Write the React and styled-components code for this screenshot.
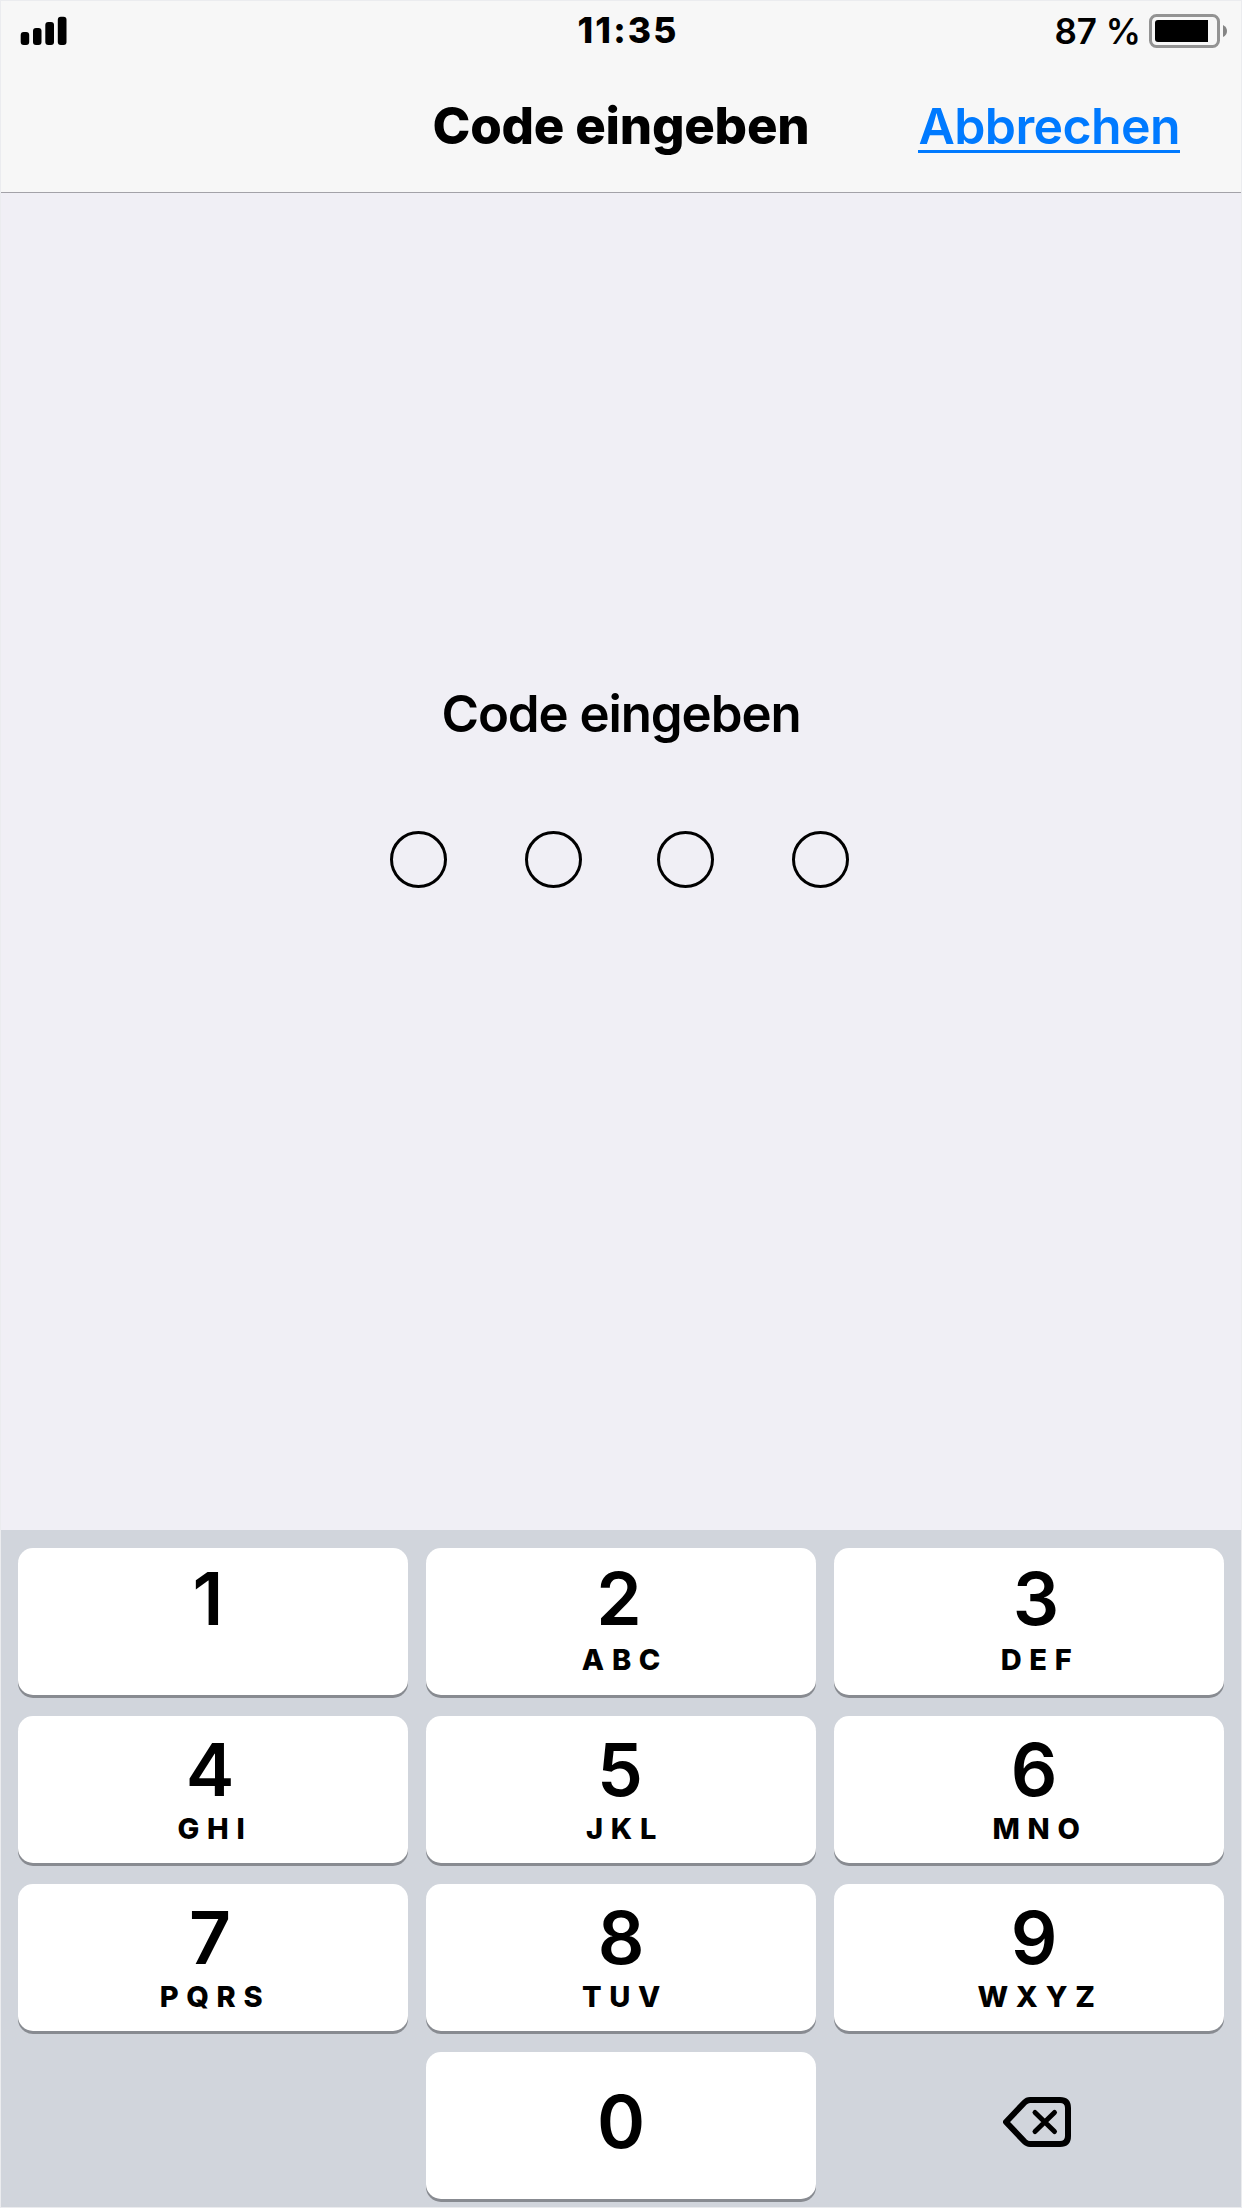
import React, { useState } from "react";
import styled, { createGlobalStyle } from "styled-components";

const GlobalStyle = createGlobalStyle`
  * {
    box-sizing: border-box;
  }
  body {
    margin: 0;
    font-family: Inter, "Liberation Sans", sans-serif;
    color: #000;
  }
`;

const Screen = styled.div`
  display: flex;
  flex-direction: column;
  width: 1242px;
  height: 2208px;
  background: #f0eff5;
  border: 1px solid #ebecef;
  overflow: hidden;
`;

const Header = styled.header`
  height: 192px;
  background: #f7f7f7;
  border-bottom: 1px solid #a3a2a8;
`;

const StatusBar = styled.div`
  display: grid;
  grid-template-columns: 1fr auto 1fr;
  align-items: center;
  height: 60px;
  padding: 0 13px 0 19px;
`;

const Time = styled.div`
  padding-left: 8px;
  font-size: 35.5px;
  font-weight: 800;
  line-height: 60px;
  letter-spacing: 2.1px;
`;

const BatteryStatus = styled.div`
  display: flex;
  justify-content: flex-end;
  align-items: center;
  gap: 8px;
  font-size: 35px;
  font-weight: 600;
  line-height: 60px;
`;

const NavBar = styled.div`
  display: grid;
  grid-template-columns: 1fr auto 1fr;
  height: 131px;
  padding-right: 61px;
  padding-left: 61px;
`;

const NavTitle = styled.h1`
  grid-column: 2;
  margin: 0;
  font-size: 51px;
  font-weight: 800;
  line-height: 129px;
  letter-spacing: -0.25px;
`;

const CancelButton = styled.button`
  justify-self: end;
  align-self: start;
  height: 57px;
  margin-top: 35px;
  padding: 0;
  border: none;
  border-bottom: 3px solid #007aff;
  background: none;
  color: #007aff;
  font-family: inherit;
  font-size: 50px;
  font-weight: 600;
  line-height: 60px;
  letter-spacing: -0.6px;
`;

const Main = styled.main`
  display: flex;
  flex: 1;
  flex-direction: column;
  align-items: center;
  padding-top: 480px;
`;

const Prompt = styled.div`
  font-size: 51px;
  font-weight: 600;
  line-height: 81px;
  letter-spacing: -1.1px;
`;

const Dots = styled.div`
  display: grid;
  grid-template-columns: repeat(4, 57px);
  justify-content: space-between;
  width: 459px;
  margin: 77px 3px 0 0;
`;

const Dot = styled.div`
  width: 57px;
  height: 57px;
  border: 3px solid #000;
  border-radius: 50%;
  background: ${(props) => (props.$filled ? "#000" : "transparent")};
  &:nth-child(2) {
    margin-left: 1px;
  }
  &:nth-child(3) {
    margin-left: -1px;
  }
`;

const Keypad = styled.div`
  display: grid;
  grid-template-columns: repeat(3, 390px);
  grid-auto-rows: 147px;
  gap: 21px 18px;
  height: 677px;
  padding: 18px 17px 0;
  background: #d1d5dc;
`;

const Key = styled.button`
  display: flex;
  flex-direction: column;
  align-items: center;
  padding: ${(props) => props.$top}px 0 0;
  border: none;
  border-radius: 15px;
  background: #fff;
  box-shadow: 0 3px 0 #888b91;
  color: #000;
  font-family: inherit;
`;

const Digit = styled.span`
  margin-left: ${(props) => props.$shift * 2}px;
  font-size: 73px;
  font-weight: 600;
  line-height: 74px;
`;

const Letters = styled.span`
  margin-top: ${(props) => props.$gap}px;
  margin-left: ${(props) => props.$shift * 2 + 8}px;
  font-size: 29px;
  font-weight: 800;
  line-height: 30px;
  letter-spacing: 7.7px;
`;

const DeleteKey = styled.button`
  grid-column: 3;
  display: flex;
  justify-content: center;
  align-items: center;
  padding: 0 0 8px 16px;
  border: none;
  background: none;
`;

const KEYS = [
  { digit: "1", shift: -5 },
  { digit: "2", letters: "ABC", shift: -2 },
  { digit: "3", letters: "DEF", shift: 7 },
  { digit: "4", letters: "GHI", shift: -3 },
  { digit: "5", letters: "JKL", shift: -1 },
  { digit: "6", letters: "MNO", shift: 5 },
  { digit: "7", letters: "PQRS", shift: -3 },
  { digit: "8", letters: "TUV", shift: 0 },
  { digit: "9", letters: "WXYZ", shift: 5 },
];

// horizontal offset of the letters in each column
const LETTER_SHIFTS = [-2, 0, 7];

const SignalIcon = () => (
  <svg width="48" height="30" viewBox="0 0 48 30">
    <rect x="0.7" y="16" width="8.5" height="13" rx="3" />
    <rect x="13" y="12" width="8.5" height="17" rx="3" />
    <rect x="25.3" y="6" width="8.7" height="23" rx="3" />
    <rect x="37.8" y="0.7" width="8.7" height="28.3" rx="3" />
  </svg>
);

const BatteryIcon = () => (
  <svg width="79" height="34" viewBox="0 0 79 34">
    <rect
      x="1.5"
      y="1.5"
      width="68"
      height="31"
      rx="6"
      fill="none"
      stroke="#939393"
      strokeWidth="3"
    />
    <path d="M9 6H59V28H9a3 3 0 0 1-3-3V9a3 3 0 0 1 3-3Z" />
    <path d="M74 11q4 2 4 6t-4 6Z" fill="#858585" />
  </svg>
);

const DeleteIcon = () => (
  <svg
    width="68"
    height="50"
    viewBox="0 0 68 50"
    fill="none"
    stroke="#000"
    strokeLinecap="round"
    strokeLinejoin="round"
  >
    <path
      d="M27 3H57Q65 3 65 11V39Q65 47 57 47H27Q24 47 21.500 44.500L3 25L21.500 5.500Q24 3 27 3Z"
      strokeWidth="6"
    />
    <path d="M32 15.500L51.500 34.500M51.500 15.500L32 34.500" strokeWidth="5" />
  </svg>
);

export default function App() {
  const [code, setCode] = useState("");

  function addDigit(digit) {
    if (code.length < 4) {
      setCode(code + digit);
    }
  }

  return (
    <>
      <GlobalStyle />
      <Screen>
        <Header>
          <StatusBar>
            <SignalIcon />
            <Time>11:35</Time>
            <BatteryStatus>
              87 %
              <BatteryIcon />
            </BatteryStatus>
          </StatusBar>
          <NavBar>
            <NavTitle>Code eingeben</NavTitle>
            <CancelButton onClick={() => setCode("")}>Abbrechen</CancelButton>
          </NavBar>
        </Header>
        <Main>
          <Prompt>Code eingeben</Prompt>
          <Dots>
            {[0, 1, 2, 3].map((index) => (
              <Dot key={index} $filled={index < code.length} />
            ))}
          </Dots>
        </Main>
        <Keypad>
          {KEYS.map(({ digit, letters, shift }, index) => (
            <Key
              key={digit}
              $top={index < 3 ? 14 : 17}
              onClick={() => addDigit(digit)}
            >
              <Digit $shift={shift}>{digit}</Digit>
              {letters && (
                <Letters
                  $gap={index < 3 ? 9 : 7}
                  $shift={LETTER_SHIFTS[index % 3]}
                >
                  {letters}
                </Letters>
              )}
            </Key>
          ))}
          <span />
          <Key $top={33} onClick={() => addDigit("0")}>
            <Digit $shift={0}>0</Digit>
          </Key>
          <DeleteKey onClick={() => setCode(code.slice(0, -1))}>
            <DeleteIcon />
          </DeleteKey>
        </Keypad>
      </Screen>
    </>
  );
}
